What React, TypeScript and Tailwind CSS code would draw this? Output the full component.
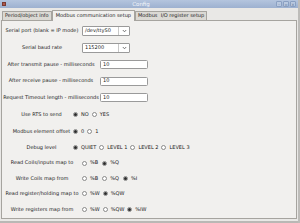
import React from 'react';

const font = { fontFamily: '"DejaVu Sans", sans-serif' };

function Radio({ checked }: { checked?: boolean }) {
  return (
    <span className="w-[5px] h-[5px] rounded-full border-[0.5px] border-[#8a8a8a] bg-white flex items-center justify-center shrink-0">
      {checked && <span className="w-[3px] h-[3px] rounded-full bg-[#2a2a2a]" />}
    </span>
  );
}

function RadioGroup({ options, selected, gap = 'gap-[3px]' }: { options: string[]; selected: number; gap?: string }) {
  return (
    <div className={`flex items-center ${gap}`}>
      {options.map((o, i) => (
        <div key={o} className="flex items-center gap-[3px]">
          <Radio checked={i === selected} />
          <span>{o}</span>
        </div>
      ))}
    </div>
  );
}

function Combo({ value }: { value: string }) {
  return (
    <div className="w-[48px] h-[10px] bg-white border-[0.5px] border-[#9a9a9a] rounded-[1px] flex items-stretch">
      <span className="flex-1 pl-[2px] flex items-center">{value}</span>
      <span className="w-[11px] border-l-[0.5px] border-[#c8c8c8] flex items-center justify-center">
        <svg width="5" height="4" viewBox="0 0 5 4">
          <path d="M0.8 1 L2.5 2.8 L4.2 1" fill="none" stroke="#555" strokeWidth="0.8" />
        </svg>
      </span>
    </div>
  );
}

function Input({ value }: { value: string }) {
  return (
    <div className="w-[48px] h-[9px] bg-white border-[0.5px] border-[#9a9a9a] rounded-[1.5px] pl-[2px] flex items-center">
      {value}
    </div>
  );
}

export default function App() {
  return (
    <div className="w-[300px] h-[223px] bg-[#e9e8e6] flex flex-col text-[5px] text-[#222222] overflow-hidden border-r-[2px] border-[#bdbcb9]" style={font}>
      {/* title bar */}
      <div className="h-[8px] bg-gradient-to-b from-[#b4c5de] to-[#9db1d0] flex items-center px-[2px] shrink-0">
        <span className="w-[4px] h-[4px] bg-[#b0584a] border-[0.5px] border-[#7a3b33]" />
        <span className="flex-1 text-center text-[5.5px] text-[#f4f6fb]">Config</span>
        <div className="flex gap-[1px]">
          {['–', '▫', '×'].map((g) => (
            <span key={g} className="w-[6px] h-[6px] rounded-[1px] border-[0.5px] border-[#8aa0c2] bg-[#b9c9e0] text-[4px] leading-[5px] text-center text-[#5b6f92]">
              {g}
            </span>
          ))}
        </div>
      </div>

      <div className="flex-1 flex flex-col px-[1px]">
        {/* tabs */}
        <div className="h-[12px] flex items-end pl-[1px] shrink-0">
          <div className="h-[9px] px-[2px] bg-[#dbd9d4] border-[0.5px] border-b-0 border-[#a6a49f] rounded-t-[1px] flex items-center">
            Period/object info
          </div>
          <div className="h-[11px] px-[3px] bg-[#f1f0ee] border-[0.5px] border-b-0 border-[#a6a49f] rounded-t-[1px] flex items-center -mb-[0.5px] relative z-10">
            Modbus communication setup
          </div>
          <div className="h-[9px] px-[2px] bg-[#dbd9d4] border-[0.5px] border-b-0 border-[#a6a49f] rounded-t-[1px] flex items-center">
            Modbus&nbsp;&nbsp;I/O register setup
          </div>
        </div>

        {/* panel */}
        <div className="h-[199px] bg-[#f1f0ee] border-[0.5px] border-[#a6a49f] flex flex-col pt-[1px]">
          <div className="h-[17px] flex items-center">
            <span className="w-[80px] text-center">Serial port (blank = IP mode)</span>
            <Combo value="/dev/ttyS0" />
          </div>
          <div className="h-[17px] flex items-center">
            <span className="w-[80px] text-center">Serial baud rate</span>
            <Combo value="115200" />
          </div>

          <div className="h-[17px] flex items-center">
            <span className="w-[98px] text-center">After transmit pause - milliseconds</span>
            <Input value="10" />
          </div>
          <div className="h-[16px] flex items-center">
            <span className="w-[98px] text-center">After receive pause - milliseconds</span>
            <Input value="10" />
          </div>
          <div className="h-[17px] flex items-center">
            <span className="w-[98px] text-center whitespace-nowrap">Request Timeout length - milliseconds</span>
            <Input value="10" />
          </div>

          <div className="h-[17px] flex items-center">
            <span className="ml-[8px] w-[63px] text-center">Use RTS to send</span>
            <RadioGroup options={['NO', 'YES']} selected={0} />
          </div>
          <div className="h-[17px] flex items-center">
            <span className="ml-[8px] w-[63px] text-center whitespace-nowrap">Modbus element offset</span>
            <RadioGroup options={['0', '1']} selected={0} />
          </div>
          <div className="h-[15px] flex items-center">
            <span className="ml-[8px] w-[63px] text-center">Debug level</span>
            <RadioGroup options={['QUIET', 'LEVEL 1', 'LEVEL 2', 'LEVEL 3']} selected={0} />
          </div>

          <div className="h-[16px] flex items-center">
            <span className="w-[80px] text-center whitespace-nowrap">Read Coils/inputs map to</span>
            <RadioGroup options={['%B', '%Q']} selected={1} gap="gap-[4px]" />
          </div>
          <div className="h-[15px] flex items-center">
            <span className="w-[80px] text-center">Write Coils map from</span>
            <RadioGroup options={['%B', '%Q', '%I']} selected={2} gap="gap-[4px]" />
          </div>
          <div className="h-[15px] flex items-center">
            <span className="w-[80px] text-center whitespace-nowrap">Read register/holding map to</span>
            <RadioGroup options={['%W', '%QW']} selected={1} />
          </div>
          <div className="h-[17px] flex items-center">
            <span className="w-[80px] text-center whitespace-nowrap">Write registers map from</span>
            <RadioGroup options={['%W', '%QW', '%IW']} selected={2} />
          </div>
        </div>
      </div>
      <div className="h-[2px] bg-[#b9b8b5] shrink-0" />
    </div>
  );
}
